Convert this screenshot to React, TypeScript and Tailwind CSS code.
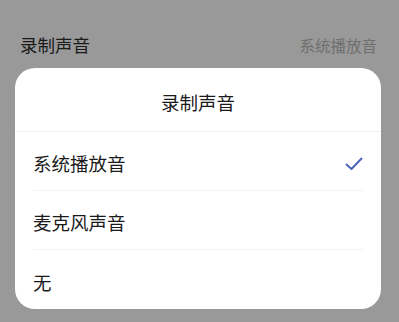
const font = { fontFamily: '"Noto Sans CJK SC", "Noto Sans", sans-serif' };

const options = ["系统播放音", "麦克风声音", "无"];

export default function App() {
  const selected = 0;
  return (
    <div className="w-[399px] h-[322px] bg-[#999999] overflow-hidden" style={font}>
      <div className="h-[68px] px-5 pt-[30px] flex items-start justify-between">
        <span className="text-[17.5px] leading-[30px] text-[#1a1a1a]">录制声音</span>
        <span className="text-[15.5px] leading-[30px] text-[#6e6e6e] mr-[2px]">系统播放音</span>
      </div>
      <div className="mx-[15px] w-[366px] h-[241px] bg-white rounded-[20px] flex flex-col">
        <div className="h-[65px] pt-[7px] flex items-center justify-center border-b border-[#f2f2f2]">
          <span className="text-[18.5px] text-[#1a1a1a]">录制声音</span>
        </div>
        <ul className="px-[18px] flex flex-col">
          {options.map((o, i) => (
            <li
              key={o}
              className={`h-[59px] pt-[6px] flex items-center justify-between ${i < options.length - 1 ? "border-b border-[#f2f2f2]" : ""}`}
            >
              <span className="text-[18.5px] text-[#1a1a1a]">{o}</span>
              <span className="w-[18px] flex">
                {i === selected && (
                  <svg width="18" height="14" viewBox="0 0 18 14">
                    <path d="M1.5 7.5 L6.5 12 L16.5 1.5" fill="none" stroke="#4a64b8" strokeWidth="2" strokeLinecap="round" strokeLinejoin="round" />
                  </svg>
                )}
              </span>
            </li>
          ))}
        </ul>
      </div>
    </div>
  );
}
